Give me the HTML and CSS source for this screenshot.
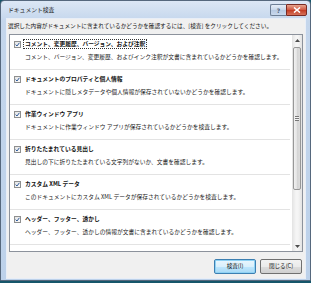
FILE: index.html
```html
<!DOCTYPE html>
<html lang="ja">
<head>
<meta charset="utf-8">
<link rel="stylesheet" href="styles.css">
</head>
<body>
<div class="window">
  <div class="titlebar">
    <span class="title">ドキュメント検査</span>
    <div class="caption-btns">
      <span class="cbtn help">?</span>
      <span class="cbtn close"><svg width="8" height="6" viewBox="0 0 8 6"><path d="M1 0.5 L7 5.5 M7 0.5 L1 5.5" stroke="#fff" stroke-width="1.6"/></svg></span>
    </div>
  </div>
  <div class="client">
    <p class="intro">選択した内容がドキュメントに含まれているかどうかを確認するには、[検査] をクリックしてください。</p>
    <div class="listbox">
      <div class="items">
        <div class="item">
          <div class="head"><span class="check"><svg width="5" height="5" viewBox="0 0 5 5"><path d="M0.6 2.6 L2 4 L4.4 0.8" fill="none" stroke="#2d5a9a" stroke-width="1"/></svg></span><span class="name focus">コメント、変更履歴、バージョン、および注釈</span></div>
          <div class="desc">コメント、バージョン、変更履歴、およびインク注釈が文書に含まれているかどうかを確認します。</div>
        </div>
        <div class="item">
          <div class="head"><span class="check"><svg width="5" height="5" viewBox="0 0 5 5"><path d="M0.6 2.6 L2 4 L4.4 0.8" fill="none" stroke="#2d5a9a" stroke-width="1"/></svg></span><span class="name">ドキュメントのプロパティと個人情報</span></div>
          <div class="desc">ドキュメントに隠しメタデータや個人情報が保存されていないかどうかを確認します。</div>
        </div>
        <div class="item">
          <div class="head"><span class="check"><svg width="5" height="5" viewBox="0 0 5 5"><path d="M0.6 2.6 L2 4 L4.4 0.8" fill="none" stroke="#2d5a9a" stroke-width="1"/></svg></span><span class="name">作業ウィンドウ アプリ</span></div>
          <div class="desc">ドキュメントに作業ウィンドウ アプリが保存されているかどうかを検査します。</div>
        </div>
        <div class="item">
          <div class="head"><span class="check"><svg width="5" height="5" viewBox="0 0 5 5"><path d="M0.6 2.6 L2 4 L4.4 0.8" fill="none" stroke="#2d5a9a" stroke-width="1"/></svg></span><span class="name">折りたたまれている見出し</span></div>
          <div class="desc">見出しの下に折りたたまれている文字列がないか、文書を確認します。</div>
        </div>
        <div class="item">
          <div class="head"><span class="check"><svg width="5" height="5" viewBox="0 0 5 5"><path d="M0.6 2.6 L2 4 L4.4 0.8" fill="none" stroke="#2d5a9a" stroke-width="1"/></svg></span><span class="name">カスタム XML データ</span></div>
          <div class="desc">このドキュメントにカスタム XML データが保存されているかどうかを検査します。</div>
        </div>
        <div class="item">
          <div class="head"><span class="check"><svg width="5" height="5" viewBox="0 0 5 5"><path d="M0.6 2.6 L2 4 L4.4 0.8" fill="none" stroke="#2d5a9a" stroke-width="1"/></svg></span><span class="name">ヘッダー、フッター、透かし</span></div>
          <div class="desc">ヘッダー、フッター、透かしの情報が文書に含まれているかどうかを確認します。</div>
        </div>
      </div>
      <div class="scrollbar">
        <div class="arrow"><svg width="5" height="3" viewBox="0 0 5 3"><path d="M0 3 L2.5 0 L5 3 Z" fill="#4d4d4d"/></svg></div>
        <div class="track">
          <div class="thumb"><span class="grip"></span></div>
        </div>
        <div class="arrow"><svg width="5" height="3" viewBox="0 0 5 3"><path d="M0 0 L2.5 3 L5 0 Z" fill="#4d4d4d"/></svg></div>
      </div>
    </div>
    <div class="buttons">
      <span class="btn default">検査(<u>I</u>)</span>
      <span class="btn">閉じる(<u>C</u>)</span>
    </div>
  </div>
</div>
<div class="desktop"></div>
</body>
</html>
```

FILE: styles.css
```css
html, body {
  margin: 0;
  padding: 0;
}
body {
  width: 311px;
  height: 283px;
  background: #16566a;
  font-family: "Noto Sans CJK JP", "Noto Sans", sans-serif;
  overflow: hidden;
}
.window {
  box-sizing: border-box;
  width: 311px;
  height: 281px;
  border: 1px solid #56687d;
  border-radius: 4px 4px 0 0;
  background: linear-gradient(to bottom, #dce7f5 0px, #c4d6ec 20px, #bcd1ea 100%);
  padding: 0 5px 2px 6px;
  display: flex;
  flex-direction: column;
}
.titlebar {
  height: 18px;
  display: flex;
  align-items: flex-start;
  justify-content: space-between;
}
.title {
  font-size: 5.8px;
  line-height: 8px;
  margin-top: 5px;
  margin-left: 1px;
  color: #1a1a1a;
}
.caption-btns {
  display: flex;
  margin-top: 3px;
  margin-right: -2px;
}
.cbtn {
  box-sizing: border-box;
  height: 12px;
  display: flex;
  align-items: center;
  justify-content: center;
  border: 1px solid #6d7f96;
}
.help {
  width: 16px;
  border-radius: 2px 0 0 2px;
  background: linear-gradient(to bottom, #e6eef8, #c6d6ea 50%, #b6c9e2 51%, #c9d9ee);
  font-size: 6px;
  font-family: "DejaVu Sans", sans-serif;
  font-weight: bold;
  color: #51657d;
  border-right: none;
}
.close {
  width: 21px;
  border-radius: 0 2px 2px 0;
  border-color: #7a2b24;
  background: linear-gradient(to bottom, #e7a58f, #d0553f 50%, #c23a22 51%, #d6725a);
}
.client {
  flex: 1;
  box-sizing: border-box;
  background: #f0f0f0;
  box-shadow: 0 0 0 1px #e8eef7;
  display: flex;
  flex-direction: column;
  padding: 3px 2px 4px 2px;
}
.intro {
  margin: 0 0 4px -1px;
  font-size: 5.65px;
  line-height: 8px;
  height: 8px;
  white-space: nowrap;
  color: #111;
}
.listbox {
  box-sizing: border-box;
  height: 218px;
  border: 1px solid #8c929c;
  background: #fff;
  display: flex;
}
.items {
  flex: 1;
  overflow: hidden;
}
.item {
  box-sizing: border-box;
  height: 35px;
  border-bottom: 1px solid #e3e3e3;
  margin-right: 2px;
  padding-top: 4px;
}
.head {
  display: flex;
  align-items: center;
  height: 10px;
}
.check {
  box-sizing: border-box;
  width: 7px;
  height: 7px;
  margin-left: 4px;
  margin-right: 2px;
  border: 1px solid #8e8f8f;
  background: linear-gradient(135deg, #e4e4e4, #fafafa);
  display: flex;
  align-items: center;
  justify-content: center;
}
.name {
  font-size: 5.75px;
  font-weight: bold;
  line-height: 8px;
  padding: 0 1px;
  border: 1px dotted transparent;
  white-space: nowrap;
  color: #111;
}
.name.focus {
  border-color: #333;
}
.desc {
  margin-top: 4px;
  padding-left: 15px;
  font-size: 5.75px;
  line-height: 8px;
  white-space: nowrap;
  color: #222;
}
.scrollbar {
  width: 10px;
  display: flex;
  flex-direction: column;
  background: linear-gradient(to right, #e3e3e3, #f5f5f5 40%, #f5f5f5 60%, #e3e3e3);
}
.arrow {
  height: 10px;
  display: flex;
  align-items: center;
  justify-content: center;
}
.track {
  flex: 1;
  padding-top: 2px;
}
.thumb {
  box-sizing: border-box;
  height: 143px;
  margin: 0 1px;
  border: 1px solid #979797;
  border-radius: 2px;
  background: linear-gradient(to right, #f1f1f1, #e2e2e2 50%, #d4d4d4 51%, #dcdcdc);
  display: flex;
  align-items: center;
  justify-content: center;
}
.grip {
  width: 4px;
  height: 5px;
  background: repeating-linear-gradient(to bottom, #777 0px, #777 1px, #f3f3f3 1px, #f3f3f3 2px);
}
.buttons {
  margin-top: 7px;
  display: flex;
  justify-content: flex-end;
  gap: 4px;
  padding-right: 1px;
}
.btn {
  box-sizing: border-box;
  width: 42px;
  height: 15px;
  border: 1px solid #707070;
  border-radius: 2px;
  background: linear-gradient(to bottom, #f2f2f2, #ebebeb 50%, #dddddd 51%, #cfcfcf);
  font-size: 5.6px;
  line-height: 13px;
  text-align: center;
  color: #111;
}
.btn.default {
  border-color: #3c7fb1;
  box-shadow: inset 0 0 0 1px #8fd2f4;
  background: linear-gradient(to bottom, #eaf6fd, #d9f0fc 50%, #bee6fd 51%, #a7d9f5);
}
.btn u {
  text-decoration: none;
}
.desktop {
  height: 2px;
}
```
